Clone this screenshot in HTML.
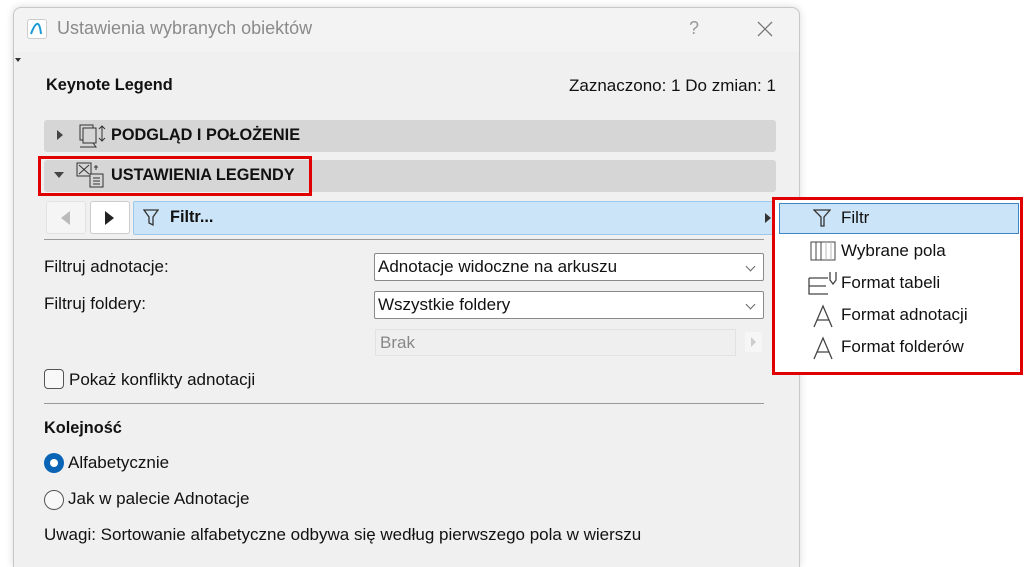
<!DOCTYPE html>
<html><head><meta charset="utf-8"><style>
*{box-sizing:border-box;margin:0;padding:0}
html,body{width:1025px;height:567px;overflow:hidden}
body{background:#fff;position:relative;font-family:"Segoe UI","Liberation Sans",sans-serif;font-size:17px;color:#111}
.abs{position:absolute}
#dlg{left:13px;top:7px;width:787px;height:560px;background:#f0f0f0;border:1px solid #c8c8c8;border-bottom:none;border-radius:8px 8px 0 0;box-shadow:0 0 8px rgba(0,0,0,.15)}
#tb{left:14px;top:8px;width:785px;height:44px;background:#f3f3f3;border-radius:8px 8px 0 0}
.bar{left:44px;width:732px;height:32px;background:#d6d6d6;border-radius:3px}
.bt{font-weight:bold;font-size:16.3px}
.dd{background:#fff;border:1px solid #8a8a8a;border-radius:2px;height:28px;width:390px;left:374px;padding:3px 3px;font-size:17px}
.chev{position:absolute;right:9px;top:9px;width:7px;height:7px;border-right:1px solid #666;border-bottom:1px solid #666;transform:rotate(45deg)}
.mi{position:absolute;left:841px;font-size:17px}
</style></head><body>
<div id="dlg" class="abs"></div>
<div id="tb" class="abs"></div>
<div class="abs" style="left:27px;top:19px;width:20px;height:20px;background:#fff;border:1px solid #ccc;border-radius:3px">
<svg width="18" height="18" viewBox="0 0 18 18"><path d="M3 14 Q7 3 10 4 Q12 5 13 14" fill="none" stroke="#1a9ad6" stroke-width="2"/></svg></div>
<div class="abs" style="left:57px;top:18px;font-size:18px;color:#8a8a8a">Ustawienia wybranych obiektów</div>
<div class="abs" style="left:689px;top:18px;font-size:18px;color:#999">?</div>
<svg class="abs" style="left:756px;top:20px" width="18" height="18"><path d="M2 2L16 16M16 2L2 16" stroke="#777" stroke-width="1.3"/></svg>
<div class="abs" style="left:15px;top:58px;width:0;height:0;border-left:3px solid transparent;border-right:3px solid transparent;border-top:4px solid #333"></div>
<div class="abs bt" style="left:46px;top:76px">Keynote Legend</div>
<div class="abs" style="left:569px;top:76px">Zaznaczono: 1 Do zmian: 1</div>

<div class="abs bar" style="top:120px"></div>
<div class="abs" style="left:57px;top:130px;width:0;height:0;border-top:5px solid transparent;border-bottom:5px solid transparent;border-left:6px solid #444"></div>
<svg class="abs" style="left:76px;top:123px" width="30" height="26"><rect x="4" y="2" width="13" height="15" fill="none" stroke="#333"/><rect x="7" y="5" width="13" height="15" fill="#d6d6d6" stroke="#333"/><path d="M4 24H20L17 20" fill="none" stroke="#333"/><path d="M26 3V18M23 6L26 3L29 6M23 15L26 18L29 15" fill="none" stroke="#333"/></svg>
<div class="abs bt" style="left:111px;top:126px">PODGLĄD I POŁOŻENIE</div>

<div class="abs bar" style="top:160px"></div>
<div class="abs" style="left:54px;top:172px;width:0;height:0;border-left:5px solid transparent;border-right:5px solid transparent;border-top:6px solid #444"></div>
<svg class="abs" style="left:76px;top:161px" width="30" height="28"><rect x="1" y="2" width="14" height="13" fill="none" stroke="#333"/><path d="M3 4L13 13M13 4L3 13" stroke="#333"/><rect x="14" y="13" width="13" height="13" fill="#d6d6d6" stroke="#333"/><path d="M17 17H24M17 20H24M17 23H24" stroke="#333"/><path d="M20 4V9M18 6H22" stroke="#333"/></svg>
<div class="abs bt" style="left:111px;top:166px">USTAWIENIA LEGENDY</div>
<div class="abs" style="left:38px;top:156px;width:274px;height:40px;border:3px solid #e00000"></div>

<div class="abs" style="left:46px;top:201px;width:40px;height:33px;background:#f5f5f5;border:1px solid #e2e2e2;border-radius:3px"></div>
<div class="abs" style="left:61px;top:211px;width:0;height:0;border-top:7px solid transparent;border-bottom:7px solid transparent;border-right:9px solid #bbb"></div>
<div class="abs" style="left:90px;top:201px;width:40px;height:33px;background:#fff;border:1px solid #ccc;border-radius:3px"></div>
<div class="abs" style="left:105px;top:211px;width:0;height:0;border-top:7px solid transparent;border-bottom:7px solid transparent;border-left:9px solid #222"></div>
<div class="abs" style="left:133px;top:201px;width:643px;height:34px;background:#cce4f7;border:1px solid #99c9ef;border-radius:2px"></div>
<svg class="abs" style="left:143px;top:209px" width="16" height="18"><path d="M1 1H15L10 8V16L6 14V8Z" fill="none" stroke="#333" stroke-width="1.3"/></svg>
<div class="abs bt" style="left:170px;top:208px">Filtr...</div>
<div class="abs" style="left:765px;top:213px;width:0;height:0;border-top:5px solid transparent;border-bottom:5px solid transparent;border-left:6px solid #333"></div>
<div class="abs" style="left:44px;top:239px;width:720px;height:1px;background:#999"></div>

<div class="abs" style="left:44px;top:257px">Filtruj adnotacje:</div>
<div class="abs" style="left:44px;top:294px">Filtruj foldery:</div>
<div class="abs dd" style="top:253px">Adnotacje widoczne na arkuszu<span class="chev"></span></div>
<div class="abs dd" style="top:291px">Wszystkie foldery<span class="chev"></span></div>
<div class="abs" style="left:375px;top:329px;width:361px;height:27px;background:#efefef;border:1px solid #e2e2e2;padding:3px 4px;color:#888">Brak</div>
<div class="abs" style="left:745px;top:332px;width:17px;height:20px;background:#f6f6f6;border-radius:2px"></div>
<div class="abs" style="left:751px;top:337px;width:0;height:0;border-top:5px solid transparent;border-bottom:5px solid transparent;border-left:5px solid #ccc"></div>

<div class="abs" style="left:44px;top:369px;width:20px;height:20px;border:1px solid #555;border-radius:4px;background:#f8f8f8"></div>
<div class="abs" style="left:69px;top:370px">Pokaż konflikty adnotacji</div>
<div class="abs" style="left:44px;top:403px;width:720px;height:1px;background:#999"></div>
<div class="abs bt" style="left:44px;top:419px">Kolejność</div>
<div class="abs" style="left:44px;top:453px;width:20px;height:20px;border-radius:50%;background:#0a64b6"></div>
<div class="abs" style="left:50px;top:459px;width:8px;height:8px;border-radius:50%;background:#fff"></div>
<div class="abs" style="left:68px;top:453px">Alfabetycznie</div>
<div class="abs" style="left:44px;top:490px;width:20px;height:20px;border-radius:50%;border:1px solid #555;background:#f8f8f8"></div>
<div class="abs" style="left:68px;top:489px">Jak w palecie Adnotacje</div>
<div class="abs" style="left:44px;top:525px">Uwagi: Sortowanie alfabetyczne odbywa się według pierwszego pola w wierszu</div>

<div class="abs" style="left:772px;top:197px;width:251px;height:178px;border:3px solid #e00000;background:#fff"></div>
<div class="abs" style="left:779px;top:203px;width:240px;height:31px;background:#cce4f7;border:1px solid #3d86c6"></div>
<svg class="abs" style="left:813px;top:209px" width="18" height="18"><path d="M1 1H17L11 8V17H8V8Z" fill="none" stroke="#333" stroke-width="1.3"/></svg>
<div class="mi" style="top:208px">Filtr</div>
<svg class="abs" style="left:810px;top:241px" width="27" height="20"><rect x="1" y="1" width="24" height="18" fill="none" stroke="#444"/><path d="M6 1V19M11 1V19" stroke="#444"/><path d="M16 1V19M21 1V19" stroke="#bbb"/></svg>
<div class="mi" style="top:241px">Wybrane pola</div>
<svg class="abs" style="left:808px;top:270px" width="30" height="26"><path d="M1 8H20M1 8V24H20M1 16H18" fill="none" stroke="#444" stroke-width="1.3"/><path d="M22 2V10L25 14L28 10V2" fill="none" stroke="#444" stroke-width="1.3"/></svg>
<div class="mi" style="top:273px">Format tabeli</div>
<svg class="abs" style="left:812px;top:304px" width="22" height="24"><path d="M2 23L11 2L20 23M5 16H17" fill="none" stroke="#444" stroke-width="1.3"/></svg>
<div class="mi" style="top:305px">Format adnotacji</div>
<svg class="abs" style="left:812px;top:336px" width="22" height="24"><path d="M2 23L11 2L20 23M5 16H17" fill="none" stroke="#444" stroke-width="1.3"/></svg>
<div class="mi" style="top:337px">Format folderów</div>
</body></html>
